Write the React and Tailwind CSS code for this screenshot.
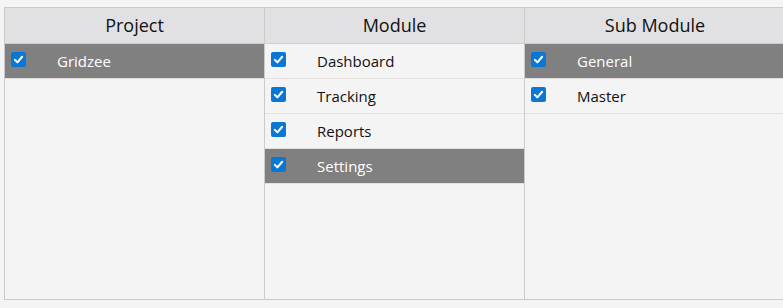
const columns = [
  { title: 'Project', items: [{ label: 'Gridzee', active: true }] },
  {
    title: 'Module',
    items: [
      { label: 'Dashboard' },
      { label: 'Tracking' },
      { label: 'Reports' },
      { label: 'Settings', active: true },
    ],
  },
  {
    title: 'Sub Module',
    items: [{ label: 'General', active: true }, { label: 'Master' }],
  },
]

function Check() {
  return (
    <span className="flex h-[15px] w-[15px] shrink-0 items-center justify-center rounded-[2px] bg-[#0b77d5] -mt-[3px]">
      <svg width="11" height="11" viewBox="0 0 12 12" fill="none">
        <path d="M2 6.4 L4.8 9.1 L10 3" stroke="white" strokeWidth="2.2" strokeLinecap="round" strokeLinejoin="round" />
      </svg>
    </span>
  )
}

export default function App() {
  return (
    <div className="h-[308px] w-[783px] overflow-hidden bg-[#f4f4f4] pl-[4px] pt-[7px] font-['Open_Sans',sans-serif]">
      <div className="flex h-[293px] w-[782px] border border-r-0 border-[#c9c9c9]">
        {columns.map((col, ci) => (
          <div
            key={col.title}
            className={['flex w-[260px] shrink-0 flex-col', ci < 2 ? 'border-r border-[#cbcbcb]' : ''].join(' ')}
          >
            <div className="flex h-[36px] items-center justify-center border-b border-[#cfcfcf] bg-[#e1e1e3] text-[18px] text-[#111]">
              {col.title}
            </div>
            {col.items.map((item) => (
              <div
                key={item.label}
                className={[
                  'flex h-[35px] items-center border-b border-[#e4e0e0] pl-[6px] text-[15px]',
                  item.active ? 'bg-[#808080] text-white' : 'text-[#111]',
                ].join(' ')}
              >
                <Check />
                <span className="ml-[31px]">{item.label}</span>
              </div>
            ))}
          </div>
        ))}
      </div>
    </div>
  )
}
